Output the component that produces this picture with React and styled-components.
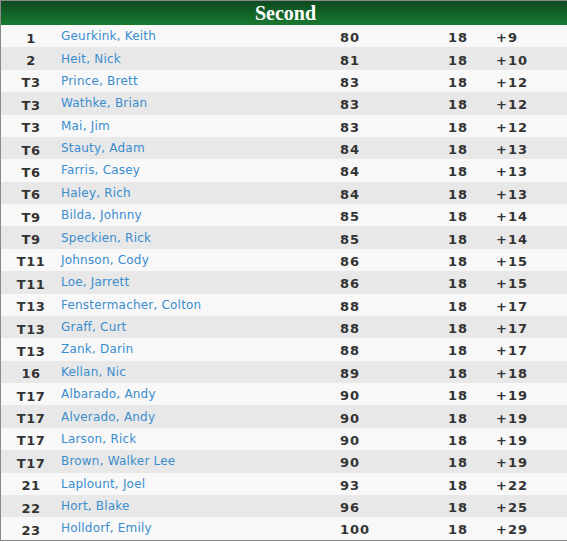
import styled, { createGlobalStyle } from "styled-components";

const GlobalStyle = createGlobalStyle`
  html, body { margin: 0; padding: 0; background: #fff; overflow: hidden; }
`;

const players = [
  ["1", "Geurkink, Keith", "80", "18", "+9"],
  ["2", "Heit, Nick", "81", "18", "+10"],
  ["T3", "Prince, Brett", "83", "18", "+12"],
  ["T3", "Wathke, Brian", "83", "18", "+12"],
  ["T3", "Mai, Jim", "83", "18", "+12"],
  ["T6", "Stauty, Adam", "84", "18", "+13"],
  ["T6", "Farris, Casey", "84", "18", "+13"],
  ["T6", "Haley, Rich", "84", "18", "+13"],
  ["T9", "Bilda, Johnny", "85", "18", "+14"],
  ["T9", "Speckien, Rick", "85", "18", "+14"],
  ["T11", "Johnson, Cody", "86", "18", "+15"],
  ["T11", "Loe, Jarrett", "86", "18", "+15"],
  ["T13", "Fenstermacher, Colton", "88", "18", "+17"],
  ["T13", "Graff, Curt", "88", "18", "+17"],
  ["T13", "Zank, Darin", "88", "18", "+17"],
  ["16", "Kellan, Nic", "89", "18", "+18"],
  ["T17", "Albarado, Andy", "90", "18", "+19"],
  ["T17", "Alverado, Andy", "90", "18", "+19"],
  ["T17", "Larson, Rick", "90", "18", "+19"],
  ["T17", "Brown, Walker Lee", "90", "18", "+19"],
  ["21", "Laplount, Joel", "93", "18", "+22"],
  ["22", "Hort, Blake", "96", "18", "+25"],
  ["23", "Holldorf, Emily", "100", "18", "+29"],
];

const App = () => {
  return (
    <>
      <GlobalStyle />
      <Board>
        <Header>Second</Header>
        {players.map(([pos, name, score, thru, total], i) => (
          <Row key={name} $even={i % 2 === 1}>
            <Pos>{pos}</Pos>
            <Name href="#">{name}</Name>
            <Num>{score}</Num>
            <Num>{thru}</Num>
            <Num>{total}</Num>
          </Row>
        ))}
      </Board>
    </>
  );
};

export default App;

const Board = styled.div`
  width: 569px;
  border-top: 1px solid #8a8a8a;
  border-left: 1px solid #8a8a8a;
  border-bottom: 1px solid #8a8a8a;
  font-family: "DejaVu Sans", Verdana, sans-serif;
`;

const Header = styled.div`
  height: 24px;
  line-height: 25px;
  text-align: center;
  color: #fff;
  font-family: "Liberation Serif", "Times New Roman", serif;
  font-weight: bold;
  font-size: 20px;
  background: linear-gradient(to bottom, #0e4a20 0%, #1a7a30 100%);
`;

const Row = styled.div`
  display: grid;
  grid-template-columns: 60px 279px 108px 48px 1fr;
  align-items: center;
  height: 22.39px;
  background: ${(p) => (p.$even ? "#e8e8e8" : "#f8f8f8")};
`;

const Pos = styled.div`
  text-align: center;
  font-weight: bold;
  font-size: 13px;
  letter-spacing: 0.5px;
  color: #333;
  padding-top: 4px;
`;

const Name = styled.a`
  color: #3a8dcf;
  font-size: 12px;
  letter-spacing: 0.2px;
  text-decoration: none;
`;

const Num = styled.div`
  font-weight: bold;
  font-size: 13px;
  letter-spacing: 1px;
  color: #333;
  padding-top: 3px;
`;
